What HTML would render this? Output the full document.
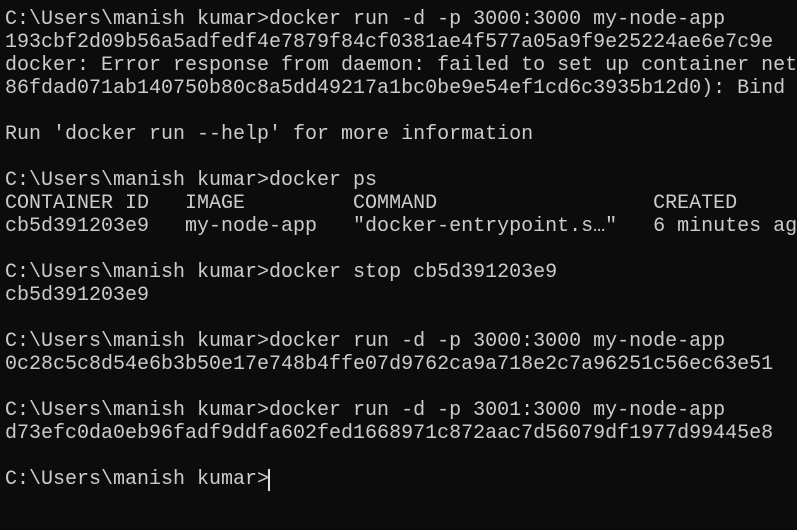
<!DOCTYPE html>
<html><head><style>
html,body{margin:0;padding:0;background:#0c0c0c;width:797px;height:530px;overflow:hidden}
pre{margin:0;position:absolute;left:5px;top:8px;width:792px;overflow:hidden;font-family:"Liberation Mono",monospace;font-size:20px;line-height:23px;color:#cccccc;white-space:pre}
.cur{position:absolute;left:268px;top:469px;width:2px;height:22px;background:#e0e0e0}
</style></head><body>
<pre>C:\Users\manish kumar>docker run -d -p 3000:3000 my-node-app
193cbf2d09b56a5adfedf4e7879f84cf0381ae4f577a05a9f9e25224ae6e7c9e
docker: Error response from daemon: failed to set up container net
86fdad071ab140750b80c8a5dd49217a1bc0be9e54ef1cd6c3935b12d0): Bind

Run 'docker run --help' for more information

C:\Users\manish kumar>docker ps
CONTAINER ID   IMAGE         COMMAND                  CREATED
cb5d391203e9   my-node-app   "docker-entrypoint.s…"   6 minutes ag

C:\Users\manish kumar>docker stop cb5d391203e9
cb5d391203e9

C:\Users\manish kumar>docker run -d -p 3000:3000 my-node-app
0c28c5c8d54e6b3b50e17e748b4ffe07d9762ca9a718e2c7a96251c56ec63e51

C:\Users\manish kumar>docker run -d -p 3001:3000 my-node-app
d73efc0da0eb96fadf9ddfa602fed1668971c872aac7d56079df1977d99445e8

C:\Users\manish kumar></pre>
<div class="cur"></div>
</body></html>
